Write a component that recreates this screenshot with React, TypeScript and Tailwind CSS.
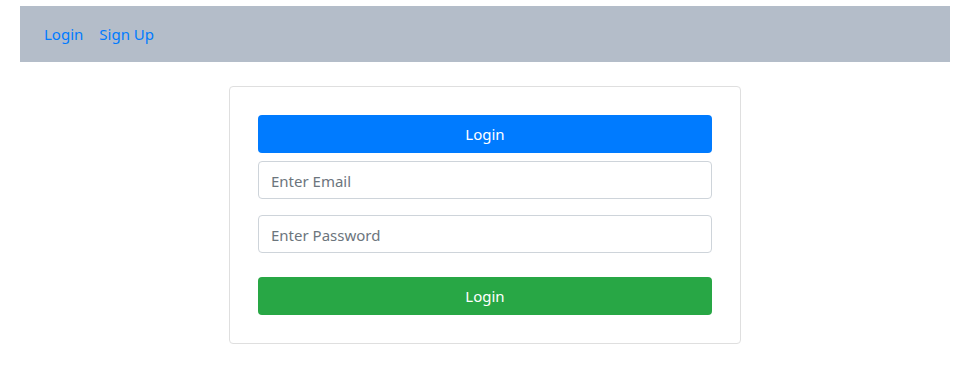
export default function App() {
  const font = { fontFamily: '"Noto Sans", "Open Sans", sans-serif' };
  return (
    <div className="min-h-screen bg-white pt-[6px]" style={font}>
      <div className="ml-[20px] w-[930px]">
        <nav className="flex h-[56px] items-center bg-[#b4bdc9] px-[16px] pt-[1px] text-[15px]">
          <a href="#" className="px-[8px] text-[#007bff]">Login</a>
          <a href="#" className="px-[8px] text-[#007bff]">Sign Up</a>
        </nav>

        <div className="mx-auto mt-[24px] w-[512px] rounded-[4px] border border-[#dfdfdf] p-[28px]">
          <button className="block h-[38px] w-full rounded-[4px] bg-[#007bff] pt-[1px] text-[15px] text-white">
            Login
          </button>
          <input
            className="mt-[8px] block h-[38px] w-full rounded-[4px] border border-[#ced4da] px-[12px] pt-[1px] text-[15px] text-[#495057] outline-none placeholder:text-[#6c757d]"
            placeholder="Enter Email"
          />
          <input
            type="password"
            className="mt-[16px] block h-[38px] w-full rounded-[4px] border border-[#ced4da] px-[12px] pt-[1px] text-[15px] text-[#495057] outline-none placeholder:text-[#6c757d]"
            placeholder="Enter Password"
          />
          <button className="mt-[24px] block h-[38px] w-full rounded-[4px] bg-[#28a745] pt-[1px] text-[15px] text-white">
            Login
          </button>
        </div>
      </div>
    </div>
  );
}
